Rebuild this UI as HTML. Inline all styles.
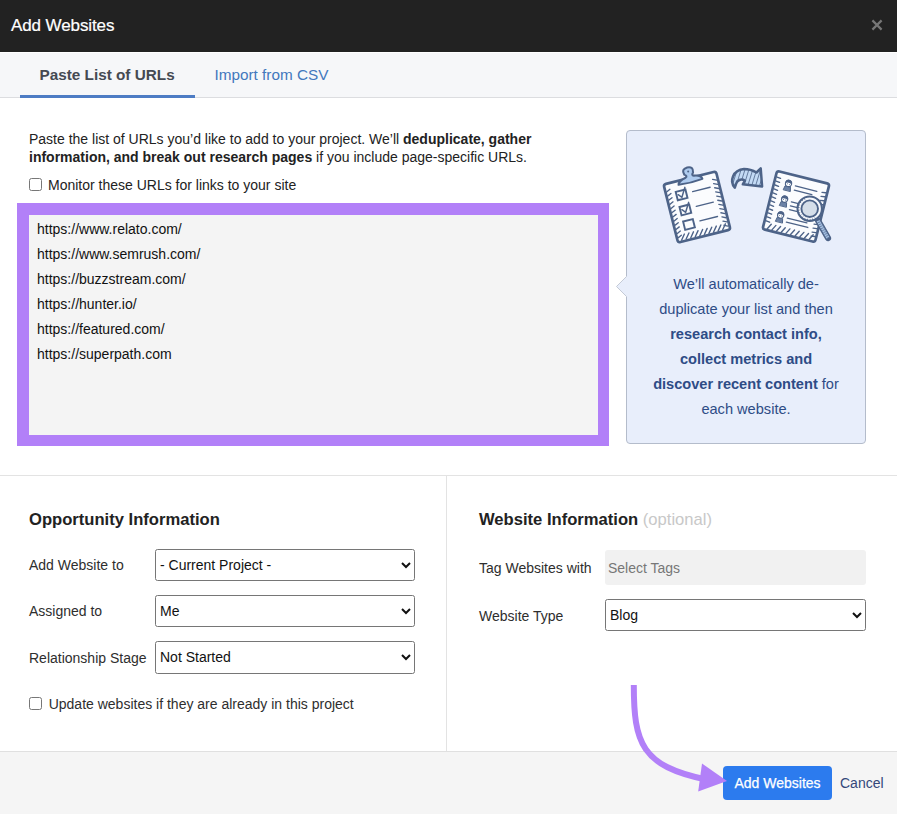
<!DOCTYPE html>
<html><head><meta charset="utf-8">
<style>
*{box-sizing:border-box;margin:0;padding:0}
html,body{width:897px;height:814px;overflow:hidden;background:#fff;font-family:"Liberation Sans",sans-serif;color:#222}
.abs{position:absolute}
#hdr{left:0;top:0;width:897px;height:52px;background:#222}
#title{left:11px;top:16px;font-size:17px;letter-spacing:-0.1px;-webkit-text-stroke:0.2px #fff;color:#fff;line-height:20px}
#close{left:870px;top:17.5px;width:14px;height:14px}
#tabs{left:0;top:53px;width:897px;height:45px;background:#f6f7f9;border-bottom:1px solid #dcdde0}
#tab1{left:39.5px;top:66px;font-size:15.3px;font-weight:bold;color:#454a52;line-height:18px}
#tabline{left:20px;top:95px;width:175px;height:3px;background:#4d7cc4}
#tab2{left:214.5px;top:66px;font-size:15.3px;color:#4278bd;line-height:18px}
.t14{font-size:14px;line-height:18px}
#para{left:29px;top:130px;width:560px;color:#222}
#chk1{left:29px;top:178px;width:13px;height:13px;border:1px solid #777;border-radius:2.5px;background:#fff}
#chk1l{left:48px;top:176px}
#purple{left:17px;top:203.2px;width:591.8px;height:243px;background:#b280f8}
#ta{left:29px;top:214.8px;width:568.5px;height:220.4px;background:#f4f4f4}
.url{position:absolute;left:37px;font-size:14px;line-height:18px;color:#111}
#panel{left:626px;top:130px;width:240px;height:314px;background:#e8eefb;border:1px solid #b4bccb;border-radius:4px}
#ptext{left:627px;top:272px;width:238px;text-align:center;font-size:14.6px;line-height:25px;color:#2e4c86}
#hsep{left:0;top:475px;width:897px;height:1px;background:#e3e3e3}
#vsep{left:446px;top:476px;width:1px;height:275px;background:#e3e3e3}
.h2{font-size:17px;font-weight:bold;line-height:20px;color:#222}
.lbl{font-size:14px;line-height:18px;color:#2e2e2e}
.sel{position:absolute;height:32px;border:1px solid #767676;border-radius:2.5px;background:#fff;font-size:14px;line-height:30px;padding-left:4px;color:#111}
.sel svg{position:absolute;right:3.5px;top:12px}
#footer{left:0;top:751px;width:897px;height:63px;background:#f5f5f5;border-top:1px solid #e0e0e0}
#btn{left:723px;top:766px;width:109px;height:34px;background:#2c7bee;border-radius:4px;color:#fff;font-size:14px;line-height:34px;text-align:center;-webkit-text-stroke:0.25px #fff}
#cancel{left:840px;top:774px;font-size:14px;line-height:18px;color:#34487a}
</style></head><body>
<div id="hdr" class="abs"></div>
<div id="title" class="abs">Add Websites</div>
<svg id="close" class="abs" viewBox="0 0 14 14"><path d="M2.4 2.4L11.6 11.6M11.6 2.4L2.4 11.6" stroke="#777" stroke-width="2.2"/></svg>
<div id="tabs" class="abs"></div>
<div id="tab1" class="abs">Paste List of URLs</div>
<div id="tabline" class="abs"></div>
<div id="tab2" class="abs">Import from CSV</div>

<div id="para" class="abs t14">Paste the list of URLs you’d like to add to your project. We’ll <b>deduplicate, gather information, and break out research pages</b> if you include page-specific URLs.</div>
<div id="chk1" class="abs"></div>
<div id="chk1l" class="abs t14">Monitor these URLs for links to your site</div>
<div id="purple" class="abs"></div>
<div id="ta" class="abs"></div>
<div class="url" style="top:219.5px">https://www.relato.com/</div>
<div class="url" style="top:244.5px">https://www.semrush.com/</div>
<div class="url" style="top:269.5px">https://buzzstream.com/</div>
<div class="url" style="top:294.5px">https://hunter.io/</div>
<div class="url" style="top:319.5px">https://featured.com/</div>
<div class="url" style="top:344.5px">https://superpath.com</div>

<div id="panel" class="abs"></div>
<svg class="abs" style="left:610px;top:270px" width="20" height="34" viewBox="610 270 20 34"><path d="M627 276 L616.5 286.5 L627 297" fill="#e8eefb" stroke="#c4cad6" stroke-width="1"/><rect x="626.6" y="276.5" width="2" height="20" fill="#e8eefb"/></svg>
<div id="ptext" class="abs">We’ll automatically de-<br>duplicate your list and then<br><b>research contact info,<br>collect metrics and<br>discover recent content</b> for<br>each website.</div>

<div id="hsep" class="abs"></div>
<div id="vsep" class="abs"></div>

<div class="abs h2" style="left:29px;top:509.6px;font-size:16.6px">Opportunity Information</div>
<div class="abs lbl" style="left:29px;top:556px">Add Website to</div>
<div class="abs lbl" style="left:29px;top:602px">Assigned to</div>
<div class="abs lbl" style="left:29px;top:649px">Relationship Stage</div>
<div class="sel" style="left:155px;top:549px;width:260px">- Current Project -<svg width="10" height="7" viewBox="0 0 10 7"><path d="M1 1L5 5L9 1" stroke="#111" stroke-width="2" fill="none"/></svg></div>
<div class="sel" style="left:155px;top:595px;width:260px">Me<svg width="10" height="7" viewBox="0 0 10 7"><path d="M1 1L5 5L9 1" stroke="#111" stroke-width="2" fill="none"/></svg></div>
<div class="sel" style="left:155px;top:641px;width:260px;height:33px;line-height:31.5px">Not Started<svg width="10" height="7" viewBox="0 0 10 7"><path d="M1 1L5 5L9 1" stroke="#111" stroke-width="2" fill="none"/></svg></div>
<div class="abs" style="left:29px;top:697px;width:13px;height:13px;border:1px solid #777;border-radius:2.5px;background:#fff"></div>
<div class="abs lbl" style="left:48.7px;top:695px">Update websites if they are already in this project</div>

<div class="abs h2" style="left:479px;top:509.6px;font-size:16.6px">Website Information <span style="font-weight:normal;color:#c8c8c8">(optional)</span></div>
<div class="abs lbl" style="left:479px;top:559px">Tag Websites with</div>
<div class="abs" style="left:605px;top:550px;width:261px;height:35px;background:#f1f1f1;border-radius:3px"></div>
<div class="abs lbl" style="left:608px;top:559px;color:#777">Select Tags</div>
<div class="abs lbl" style="left:479px;top:607px">Website Type</div>
<div class="sel" style="left:605px;top:599px;width:261px">Blog<svg width="10" height="7" viewBox="0 0 10 7"><path d="M1 1L5 5L9 1" stroke="#111" stroke-width="2" fill="none"/></svg></div>

<div id="footer" class="abs"></div>
<div id="btn" class="abs">Add Websites</div>
<div id="cancel" class="abs">Cancel</div>
<svg class="abs" style="left:640px;top:150px" width="200" height="110" viewBox="640 150 200 110"><g transform="translate(697 207) rotate(-14)" stroke="#4d6388" stroke-linecap="round"><rect x="-27" y="-30" width="54" height="60" rx="2.5" fill="#fbfcfe" stroke="#4d6388" stroke-width="2.7"/><line x1="-25.5" y1="-22.1" x2="-22.0" y2="-23.7" stroke-width="1.35"/><line x1="-25.5" y1="-17.8" x2="-22.0" y2="-19.4" stroke-width="1.35"/><line x1="-25.5" y1="-13.5" x2="-22.0" y2="-15.1" stroke-width="1.35"/><line x1="-25.5" y1="-9.2" x2="-22.0" y2="-10.8" stroke-width="1.35"/><line x1="-25.5" y1="-4.9" x2="-22.0" y2="-6.5" stroke-width="1.35"/><line x1="-25.5" y1="-0.6" x2="-22.0" y2="-2.2" stroke-width="1.35"/><line x1="-25.5" y1="3.7" x2="-22.0" y2="2.1" stroke-width="1.35"/><line x1="-25.5" y1="8.0" x2="-22.0" y2="6.4" stroke-width="1.35"/><line x1="-25.5" y1="12.3" x2="-22.0" y2="10.7" stroke-width="1.35"/><line x1="-25.5" y1="16.6" x2="-22.0" y2="15.0" stroke-width="1.35"/><line x1="-25.5" y1="20.9" x2="-22.0" y2="19.3" stroke-width="1.35"/><line x1="-25.5" y1="25.2" x2="-22.0" y2="23.6" stroke-width="1.35"/><line x1="21.8" y1="-23.0" x2="25.5" y2="-21.3" stroke-width="1.35"/><line x1="21.8" y1="-18.7" x2="25.5" y2="-17.0" stroke-width="1.35"/><line x1="21.8" y1="-14.4" x2="25.5" y2="-12.7" stroke-width="1.35"/><line x1="21.8" y1="-10.1" x2="25.5" y2="-8.4" stroke-width="1.35"/><line x1="21.8" y1="-5.8" x2="25.5" y2="-4.1" stroke-width="1.35"/><line x1="21.8" y1="-1.5" x2="25.5" y2="0.2" stroke-width="1.35"/><line x1="21.8" y1="2.8" x2="25.5" y2="4.5" stroke-width="1.35"/><line x1="21.8" y1="7.1" x2="25.5" y2="8.8" stroke-width="1.35"/><line x1="21.8" y1="11.4" x2="25.5" y2="13.1" stroke-width="1.35"/><line x1="21.8" y1="15.7" x2="25.5" y2="17.4" stroke-width="1.35"/><line x1="21.8" y1="20.0" x2="25.5" y2="21.7" stroke-width="1.35"/><line x1="21.8" y1="24.3" x2="25.5" y2="26.0" stroke-width="1.35"/><line x1="-23.0" y1="28.5" x2="-18.8" y2="23.2" stroke-width="1.4"/><line x1="-18.3" y1="28.5" x2="-14.1" y2="23.2" stroke-width="1.4"/><line x1="-13.6" y1="28.5" x2="-9.4" y2="23.2" stroke-width="1.4"/><line x1="-8.9" y1="28.5" x2="-4.7" y2="23.2" stroke-width="1.4"/><line x1="-4.2" y1="28.5" x2="-0.0" y2="23.2" stroke-width="1.4"/><line x1="0.5" y1="28.5" x2="4.7" y2="23.2" stroke-width="1.4"/><line x1="5.2" y1="28.5" x2="9.4" y2="23.2" stroke-width="1.4"/><line x1="9.9" y1="28.5" x2="14.1" y2="23.2" stroke-width="1.4"/><line x1="14.6" y1="28.5" x2="18.8" y2="23.2" stroke-width="1.4"/><line x1="19.3" y1="28.5" x2="23.5" y2="23.2" stroke-width="1.4"/><rect x="-17" y="-19.8" width="10" height="8.6" fill="none" stroke="#4d6388" stroke-width="1.9"/><rect x="-17" y="-4.3" width="10" height="8.6" fill="none" stroke="#4d6388" stroke-width="1.9"/><rect x="-17" y="10.7" width="10" height="8.6" fill="none" stroke="#4d6388" stroke-width="1.9"/><path d="M-15.3 -16.5 L-12.3 -13.1 L-7 -22.0" fill="none" stroke="#4d6388" stroke-width="1.5"/><path d="M-15.3 -1.0 L-12.3 2.4 L-7 -6.5" fill="none" stroke="#4d6388" stroke-width="1.5"/><line x1="-0.5" y1="-16.0" x2="17.5" y2="-16.0" stroke-width="1.4"/><line x1="-0.5" y1="-0.8" x2="17.0" y2="-0.8" stroke-width="1.4"/><line x1="-0.5" y1="14.2" x2="17.6" y2="14.2" stroke-width="1.4"/><path d="M-12.5 -26 Q-12 -29.5 -4 -31.2 Q-1.5 -32 -4.5 -34.5 Q-6.5 -40.5 0 -40.8 Q6.5 -40.5 4.5 -34.5 Q2 -32 4.5 -31.2 Q12 -30 12 -26 Q0 -24.5 -12.5 -26 Z" fill="#aecbef" stroke="#4d6388" stroke-width="2.1" stroke-linejoin="round"/><circle cx="0" cy="-36.5" r="1" fill="#4d6388" stroke="none"/></g><clipPath id="ac"><path d="M734.8,187.6 C729,181 733,170 744,169 C750,169 754,171 756.5,172.5 L760.7,168.4 L762.1,186.5 L742.8,184.3 L745,180.5 C741,178.5 737,180 736,184 Z"/></clipPath><path d="M734.8,187.6 C729,181 733,170 744,169 C750,169 754,171 756.5,172.5 L760.7,168.4 L762.1,186.5 L742.8,184.3 L745,180.5 C741,178.5 737,180 736,184 Z" fill="#c3daf5"/><g clip-path="url(#ac)" stroke="#4d6388"><line x1="727.0" y1="190.0" x2="735.0" y2="164.0" stroke-width="0.8"/><line x1="730.9" y1="190.0" x2="738.9" y2="164.0" stroke-width="0.8"/><line x1="734.8" y1="190.0" x2="742.8" y2="164.0" stroke-width="0.8"/><line x1="738.7" y1="190.0" x2="746.7" y2="164.0" stroke-width="0.8"/><line x1="742.6" y1="190.0" x2="750.6" y2="164.0" stroke-width="0.8"/><line x1="746.5" y1="190.0" x2="754.5" y2="164.0" stroke-width="0.8"/><line x1="750.4" y1="190.0" x2="758.4" y2="164.0" stroke-width="0.8"/><line x1="754.3" y1="190.0" x2="762.3" y2="164.0" stroke-width="0.8"/><line x1="758.2" y1="190.0" x2="766.2" y2="164.0" stroke-width="0.8"/><line x1="762.1" y1="190.0" x2="770.1" y2="164.0" stroke-width="0.8"/><line x1="766.0" y1="190.0" x2="774.0" y2="164.0" stroke-width="0.8"/><line x1="769.9" y1="190.0" x2="777.9" y2="164.0" stroke-width="0.8"/></g><path d="M734.8,187.6 C729,181 733,170 744,169 C750,169 754,171 756.5,172.5 L760.7,168.4 L762.1,186.5 L742.8,184.3 L745,180.5 C741,178.5 737,180 736,184 Z" fill="none" stroke="#4d6388" stroke-width="2.5" stroke-linejoin="round"/><g transform="translate(796 206.5) rotate(14)" stroke="#4d6388" stroke-linecap="round"><rect x="-27" y="-30" width="54" height="60" rx="2.5" fill="#fbfcfe" stroke="#4d6388" stroke-width="2.7"/><line x1="-25.5" y1="-24.0" x2="-21.8" y2="-23.5" stroke-width="1.35"/><line x1="-25.5" y1="-19.9" x2="-21.8" y2="-19.4" stroke-width="1.35"/><line x1="-25.5" y1="-15.8" x2="-21.8" y2="-15.3" stroke-width="1.35"/><line x1="-25.5" y1="-11.7" x2="-21.8" y2="-11.2" stroke-width="1.35"/><line x1="-25.5" y1="-7.6" x2="-21.8" y2="-7.1" stroke-width="1.35"/><line x1="-25.5" y1="-3.5" x2="-21.8" y2="-3.0" stroke-width="1.35"/><line x1="-25.5" y1="0.6" x2="-21.8" y2="1.1" stroke-width="1.35"/><line x1="-25.5" y1="4.7" x2="-21.8" y2="5.2" stroke-width="1.35"/><line x1="-25.5" y1="8.8" x2="-21.8" y2="9.3" stroke-width="1.35"/><line x1="-25.5" y1="12.9" x2="-21.8" y2="13.4" stroke-width="1.35"/><line x1="-25.5" y1="17.0" x2="-21.8" y2="17.5" stroke-width="1.35"/><line x1="-25.5" y1="21.1" x2="-21.8" y2="21.6" stroke-width="1.35"/><line x1="21.8" y1="-20.0" x2="25.5" y2="-20.5" stroke-width="1.35"/><line x1="21.8" y1="-15.9" x2="25.5" y2="-16.4" stroke-width="1.35"/><line x1="21.8" y1="-11.8" x2="25.5" y2="-12.3" stroke-width="1.35"/><line x1="21.8" y1="-7.7" x2="25.5" y2="-8.2" stroke-width="1.35"/><line x1="21.8" y1="-3.6" x2="25.5" y2="-4.1" stroke-width="1.35"/><line x1="21.8" y1="0.5" x2="25.5" y2="-0.0" stroke-width="1.35"/><line x1="21.8" y1="4.6" x2="25.5" y2="4.1" stroke-width="1.35"/><line x1="21.8" y1="8.7" x2="25.5" y2="8.2" stroke-width="1.35"/><line x1="21.8" y1="12.8" x2="25.5" y2="12.3" stroke-width="1.35"/><line x1="21.8" y1="16.9" x2="25.5" y2="16.4" stroke-width="1.35"/><line x1="21.8" y1="21.0" x2="25.5" y2="20.5" stroke-width="1.35"/><line x1="21.8" y1="25.1" x2="25.5" y2="24.6" stroke-width="1.35"/><line x1="-22.5" y1="28.5" x2="-19.7" y2="23.2" stroke-width="1.4"/><line x1="-17.7" y1="28.5" x2="-14.9" y2="23.2" stroke-width="1.4"/><line x1="-12.9" y1="28.5" x2="-10.1" y2="23.2" stroke-width="1.4"/><line x1="-8.1" y1="28.5" x2="-5.3" y2="23.2" stroke-width="1.4"/><line x1="-3.3" y1="28.5" x2="-0.5" y2="23.2" stroke-width="1.4"/><line x1="1.5" y1="28.5" x2="4.3" y2="23.2" stroke-width="1.4"/><line x1="6.3" y1="28.5" x2="9.1" y2="23.2" stroke-width="1.4"/><line x1="11.1" y1="28.5" x2="13.9" y2="23.2" stroke-width="1.4"/><line x1="15.9" y1="28.5" x2="18.7" y2="23.2" stroke-width="1.4"/><line x1="20.7" y1="28.5" x2="23.5" y2="23.2" stroke-width="1.4"/><path d="M-16.4 -13.5 L-15.6 -17.5 L-10.0 -17.5 L-9.2 -13.5 Z" fill="#6c82a6" stroke="#4d6388" stroke-width="0.9"/><circle cx="-12.8" cy="-20.5" r="3.1" fill="#fff" stroke="#4d6388" stroke-width="1.1"/><path d="M-16.4 -20.2 Q-15.8 -24.4 -12.8 -24.4 Q-9.8 -24.4 -9.2 -20.2 Q-12.8 -22.5 -16.4 -20.2 Z" fill="#4d6388" stroke="none"/><circle cx="-13.9" cy="-19.9" r="0.5" fill="#4d6388" stroke="none"/><circle cx="-11.7" cy="-19.9" r="0.5" fill="#4d6388" stroke="none"/><path d="M-16.4 2.7 L-15.6 -1.3 L-10.0 -1.3 L-9.2 2.7 Z" fill="#6c82a6" stroke="#4d6388" stroke-width="0.9"/><circle cx="-12.8" cy="-4.3" r="3.1" fill="#fff" stroke="#4d6388" stroke-width="1.1"/><path d="M-16.4 -4.0 Q-15.8 -8.2 -12.8 -8.2 Q-9.8 -8.2 -9.2 -4.0 Q-12.8 -6.3 -16.4 -4.0 Z" fill="#4d6388" stroke="none"/><circle cx="-13.9" cy="-3.7" r="0.5" fill="#4d6388" stroke="none"/><circle cx="-11.7" cy="-3.7" r="0.5" fill="#4d6388" stroke="none"/><path d="M-16.4 19.0 L-15.6 15.0 L-10.0 15.0 L-9.2 19.0 Z" fill="#6c82a6" stroke="#4d6388" stroke-width="0.9"/><circle cx="-12.8" cy="12.0" r="3.1" fill="#fff" stroke="#4d6388" stroke-width="1.1"/><path d="M-16.4 12.3 Q-15.8 8.1 -12.8 8.1 Q-9.8 8.1 -9.2 12.3 Q-12.8 10.0 -16.4 12.3 Z" fill="#4d6388" stroke="none"/><circle cx="-13.9" cy="12.6" r="0.5" fill="#4d6388" stroke="none"/><circle cx="-11.7" cy="12.6" r="0.5" fill="#4d6388" stroke="none"/><line x1="-5.6" y1="-19.8" x2="16.5" y2="-19.8" stroke-width="1.3"/><line x1="-5.6" y1="-15.4" x2="12.5" y2="-15.4" stroke-width="1.3"/><line x1="-5.6" y1="-3.3" x2="10.0" y2="-3.3" stroke-width="1.3"/><line x1="-5.6" y1="0.7" x2="10.0" y2="0.7" stroke-width="1.3"/><line x1="-5.6" y1="4.7" x2="9.0" y2="4.7" stroke-width="1.3"/><line x1="-5.6" y1="13.3" x2="14.5" y2="13.3" stroke-width="1.3"/><line x1="-5.6" y1="17.5" x2="16.5" y2="17.5" stroke-width="1.3"/></g><g stroke="#4d6388"><line x1="818" y1="220.5" x2="828" y2="238" stroke="#4d6388" stroke-width="6.2" stroke-linecap="round"/><line x1="818" y1="220.5" x2="828" y2="238" stroke="#a9c4e6" stroke-width="3.2" stroke-linecap="butt"/><line x1="816.7" y1="220.8" x2="819.3" y2="219.9" stroke-width="0.7"/><line x1="817.8" y1="222.7" x2="820.4" y2="221.8" stroke-width="0.7"/><line x1="818.9" y1="224.7" x2="821.5" y2="223.8" stroke-width="0.7"/><line x1="820.0" y1="226.6" x2="822.6" y2="225.7" stroke-width="0.7"/><line x1="821.1" y1="228.6" x2="823.7" y2="227.7" stroke-width="0.7"/><line x1="822.3" y1="230.5" x2="824.9" y2="229.6" stroke-width="0.7"/><line x1="823.4" y1="232.5" x2="826.0" y2="231.6" stroke-width="0.7"/><line x1="824.5" y1="234.4" x2="827.1" y2="233.5" stroke-width="0.7"/><line x1="825.6" y1="236.4" x2="828.2" y2="235.5" stroke-width="0.7"/><line x1="826.7" y1="238.3" x2="829.3" y2="237.4" stroke-width="0.7"/><circle cx="809.7" cy="208.7" r="12.2" fill="#f6f8fc" stroke="#4d6388" stroke-width="2"/><circle cx="809.7" cy="208.7" r="8.3" fill="#d5dee9" stroke="#4d6388" stroke-width="1.9"/><line x1="814.8" y1="217.5" x2="815.7" y2="219.1" stroke-width="0.8"/><line x1="812.5" y1="218.5" x2="813.0" y2="220.2" stroke-width="0.8"/><line x1="810.1" y1="218.9" x2="810.1" y2="220.7" stroke-width="0.8"/><line x1="807.6" y1="218.7" x2="807.2" y2="220.4" stroke-width="0.8"/><line x1="805.2" y1="217.9" x2="804.4" y2="219.5" stroke-width="0.8"/><line x1="803.1" y1="216.5" x2="802.0" y2="217.9" stroke-width="0.8"/><line x1="801.4" y1="214.7" x2="800.0" y2="215.8" stroke-width="0.8"/><line x1="800.2" y1="212.5" x2="798.6" y2="213.2" stroke-width="0.8"/><line x1="799.6" y1="210.1" x2="797.8" y2="210.4" stroke-width="0.8"/><line x1="799.6" y1="207.6" x2="797.8" y2="207.4" stroke-width="0.8"/><line x1="800.1" y1="205.2" x2="798.4" y2="204.6" stroke-width="0.8"/><line x1="801.2" y1="203.0" x2="799.8" y2="202.0" stroke-width="0.8"/><line x1="802.9" y1="201.1" x2="801.7" y2="199.8" stroke-width="0.8"/><line x1="804.9" y1="199.7" x2="804.1" y2="198.1" stroke-width="0.8"/></g></svg>
<svg class="abs" style="left:0;top:0" width="897" height="814" viewBox="0 0 897 814"><path d="M633.8 685 C633.8 743.5 641.6 766 706 779.5" fill="none" stroke="#b280f8" stroke-width="6"/><path d="M727 781 L702 763.5 L698.2 791.5 Z" fill="#b280f8"/></svg>
</body></html>
